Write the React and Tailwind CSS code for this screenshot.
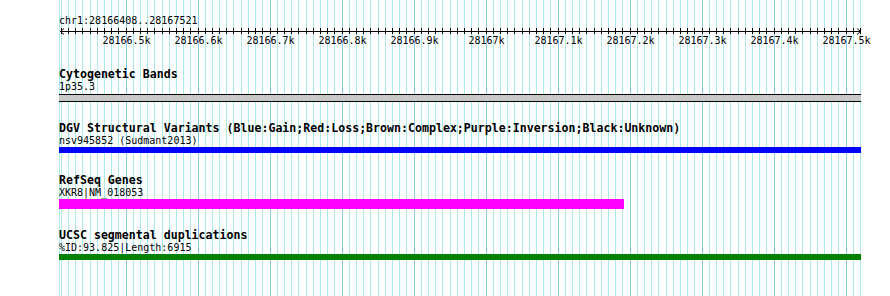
import React from "react";

const START = 28166408;
const X0 = 59.76;
const S = 0.72;
const xOf = (bp) => X0 + (bp - START) * S;

function Grid() {
  const lines = [];
  lines.push(<line key="edge" x1={59.5} x2={59.5} y1={0} y2={296} stroke="#aae8ec" strokeWidth="1" />);
  for (let bp = 28166410; bp <= 28167520; bp += 10) {
    const x = Math.floor(xOf(bp)) + 0.5;
    const major = bp % 100 === 0;
    lines.push(
      <line key={bp} x1={x} x2={x} y1={0} y2={296} stroke={major ? "#88c8ec" : "#aae8ec"} strokeWidth="1" />
    );
  }
  return (
    <svg className="absolute left-0 top-0" width="890" height="296">
      {lines}
    </svg>
  );
}

function Ruler() {
  const ticks = [];
  for (let bp = 28166410; bp <= 28167520; bp += 10) {
    const x = Math.floor(xOf(bp)) + 0.5 - 59;
    ticks.push(<line key={bp} x1={x} x2={x} y1={1} y2={7} stroke="#000" strokeWidth="1" />);
  }
  return (
    <svg width="806" height="8" className="block">
      <line x1="1" x2="802" y1="4.5" y2="4.5" stroke="#000" strokeWidth="1" />
      <polyline points="5,1.5 1.5,4.5 5,7.5" fill="none" stroke="#000" strokeWidth="1" />
      <polyline points="798,1.5 801.5,4.5 798,7.5" fill="none" stroke="#000" strokeWidth="1" />
      {ticks}
    </svg>
  );
}

const labels = [
  "28166.5k", "28166.6k", "28166.7k", "28166.8k", "28166.9k", "28167k",
  "28167.1k", "28167.2k", "28167.3k", "28167.4k", "28167.5k",
];

function TickLabels() {
  return (
    <div className="relative h-[12px] text-[10px] leading-[12px]">
      {labels.map((l, i) => {
        const x = Math.floor(xOf(28166500 + i * 100)) - 59;
        return (
          <span key={l} className="absolute top-0 -translate-x-1/2 whitespace-nowrap" style={{ left: x + 0.5 }}>
            {l}
          </span>
        );
      })}
    </div>
  );
}

function Track({ title, label, bar, titleMt }) {
  return (
    <div className={titleMt}>
      <div className="font-bold text-[11.6px] leading-[13px] whitespace-nowrap">{title}</div>
      <div className="text-[10px] leading-[12px] whitespace-nowrap">{label}</div>
      {bar}
    </div>
  );
}

export default function App() {
  return (
    <div
      className="relative w-[890px] h-[296px] overflow-hidden bg-white text-black"
      style={{ fontFamily: '"DejaVu Sans Mono", "Liberation Mono", monospace' }}
    >
      <Grid />
      <div className="relative pl-[59px] w-[861px]">
        <div className="pt-[14px] text-[10px] leading-[13px] whitespace-nowrap">chr1:28166408..28167521</div>
        <Ruler />
        <TickLabels />
        <Track
          titleMt="mt-[21px]"
          title="Cytogenetic Bands"
          label="1p35.3"
          bar={<div className="h-[8px] w-[802px] bg-[#c8c8c8] border-y border-black mt-px" />}
        />
        <Track
          titleMt="mt-[20px]"
          title="DGV Structural Variants (Blue:Gain;Red:Loss;Brown:Complex;Purple:Inversion;Black:Unknown)"
          label="nsv945852 (Sudmant2013)"
          bar={<div className="h-[6px] w-[802px] bg-[#0000ff]" />}
        />
        <Track
          titleMt="mt-[21px]"
          title="RefSeq Genes"
          label="XKR8|NM_018053"
          bar={<div className="h-[10px] w-[565px] bg-[#ff00ff]" />}
        />
        <Track
          titleMt="mt-[20px]"
          title="UCSC segmental duplications"
          label="%ID:93.825|Length:6915"
          bar={<div className="h-[6px] w-[802px] bg-[#008000]" />}
        />
      </div>
    </div>
  );
}
